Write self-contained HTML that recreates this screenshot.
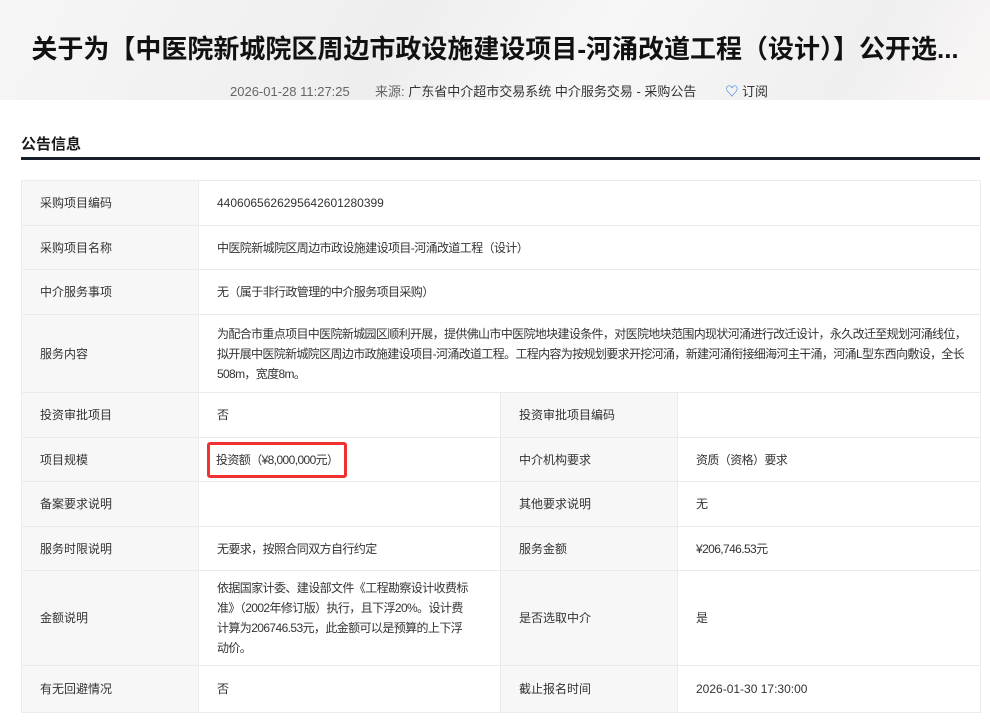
<!DOCTYPE html>
<html><head><meta charset="utf-8"><style>
body{margin:0;width:990px;height:721px;overflow:hidden;background:#fff;font-family:"Liberation Sans","Noto Sans CJK SC",sans-serif;color:#333}
.hdr{position:absolute;left:0;top:0;width:990px;height:100px;background:linear-gradient(120deg,#f6f6f6,#eeeeee 40%,#f7f7f7 60%,#efefef 85%,#faf6f6)}
.title{position:absolute;left:0;top:29px;width:990px;text-align:center;font-size:26px;font-weight:bold;color:#111;letter-spacing:0}
.meta{position:absolute;top:81px;left:230px;font-size:13px;color:#666;white-space:nowrap}
.meta b{font-weight:normal;color:#333}
.sec{position:absolute;left:21px;top:133px;font-size:15px;font-weight:bold;color:#1a1a1a}
.bar{position:absolute;left:21px;top:157px;width:959px;height:3px;background:#17202a}
table{position:absolute;left:21px;top:180px;width:959px;border-collapse:collapse;table-layout:fixed;font-size:12px;color:#333;letter-spacing:-0.6px}
td{border:1px solid #ebebeb;padding:0 12px 0 18px;line-height:20px}
td.l{background:#f7f7f7;padding-left:18px;letter-spacing:0}
.box{display:inline-block;border:3px solid #f03232;border-radius:3px;padding:5px 6px;margin-left:-10px}
</style></head><body>
<div class="hdr"></div>
<div class="title">关于为【中医院新城院区周边市政设施建设项目-河涌改道工程（设计）】公开选...</div>
<div class="meta">2026-01-28 11:27:25 &nbsp;&nbsp;&nbsp;&nbsp;&nbsp;&nbsp;来源: <b>广东省中介超市交易系统 中介服务交易 - 采购公告</b> &nbsp;&nbsp;&nbsp;&nbsp;&nbsp;&nbsp;&nbsp;<span style="color:#2a6ee0">♡</span> <b>订阅</b></div>
<div class="sec">公告信息</div>
<div class="bar"></div>
<table>
<colgroup><col style="width:177px"><col style="width:302px"><col style="width:177px"><col style="width:303px"></colgroup>
<tr style="height:45px"><td class="l">采购项目编码</td><td colspan="3" style="letter-spacing:0">440606562629564260128039​9</td></tr>
<tr style="height:44px"><td class="l">采购项目名称</td><td colspan="3">中医院新城院区周边市政设施建设项目-河涌改道工程（设计）</td></tr>
<tr style="height:45px"><td class="l">中介服务事项</td><td colspan="3">无（属于非行政管理的中介服务项目采购）</td></tr>
<tr style="height:78px"><td class="l">服务内容</td><td colspan="3" style="padding-right:4px;letter-spacing:-0.65px">为配合市重点项目中医院新城园区顺利开展，提供佛山市中医院地块建设条件，对医院地块范围内现状河涌进行改迁设计，永久改迁至规划河涌线位，拟开展中医院新城院区周边市政施建设项目-河涌改道工程。工程内容为按规划要求开挖河涌，新建河涌衔接细海河主干涌，河涌L型东西向敷设，全长508m，宽度8m。</td></tr>
<tr style="height:45px"><td class="l">投资审批项目</td><td>否</td><td class="l">投资审批项目编码</td><td></td></tr>
<tr style="height:44px"><td class="l">项目规模</td><td><span class="box">投资额（¥8,000,000元）</span></td><td class="l">中介机构要求</td><td>资质（资格）要求</td></tr>
<tr style="height:45px"><td class="l">备案要求说明</td><td></td><td class="l">其他要求说明</td><td>无</td></tr>
<tr style="height:44px"><td class="l">服务时限说明</td><td>无要求，按照合同双方自行约定</td><td class="l">服务金额</td><td>¥206,746.53元</td></tr>
<tr style="height:95px"><td class="l">金额说明</td><td style="padding-right:28px">依据国家计委、建设部文件《工程勘察设计收费标准》（2002年修订版）执行，且下浮20%。设计费计算为206746.53元，此金额可以是预算的上下浮动价。</td><td class="l">是否选取中介</td><td>是</td></tr>
<tr style="height:47px"><td class="l">有无回避情况</td><td>否</td><td class="l">截止报名时间</td><td style="letter-spacing:0">2026-01-30 17:30:00</td></tr>
</table>
</body></html>
